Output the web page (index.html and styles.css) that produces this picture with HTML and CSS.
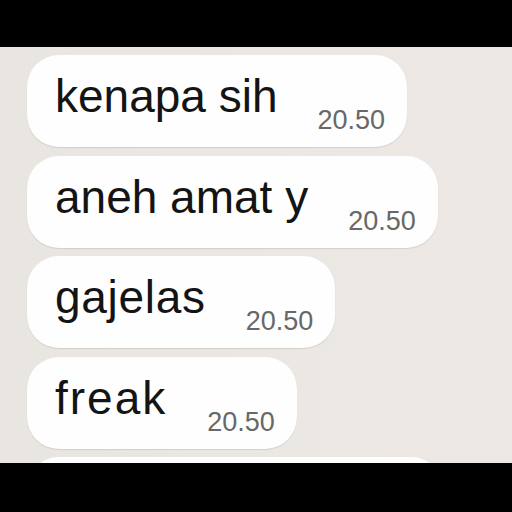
FILE: index.html
```html
<!DOCTYPE html>
<html>
<head>
<meta charset="utf-8">
<link rel="stylesheet" href="styles.css">
</head>
<body>
<div class="bar"></div>
<div class="chat">
  <div class="bubble"><span class="msg">kenapa sih</span><span class="time">20.50</span></div>
  <div class="bubble"><span class="msg">aneh amat y</span><span class="time">20.50</span></div>
  <div class="bubble"><span class="msg msg-mid">gajelas</span><span class="time">20.50</span></div>
  <div class="bubble"><span class="msg msg-loose">freak</span><span class="time">20.50</span></div>
  <div class="bubble bubble-wide"></div>
</div>
<div class="bar bar-bottom"></div>
</body>
</html>
```

FILE: styles.css
```css
html, body {
  margin: 0;
  padding: 0;
  background: #000;
  width: 512px;
  height: 512px;
  overflow: hidden;
  font-family: "Liberation Sans", Arial, sans-serif;
}
.bar {
  height: 47px;
  background: #000;
}
.bar-bottom {
  height: 49px;
}
.chat {
  height: 416px;
  overflow: hidden;
  background: linear-gradient(90deg, #e9e5e0 0%, #ebe7e2 60%, #eee8e5 100%);
  display: flex;
  flex-direction: column;
  align-items: flex-start;
  gap: 8.5px;
  padding: 8px 0 0 27px;
  box-sizing: border-box;
}
.bubble {
  flex: none;
  display: flex;
  align-items: flex-start;
  height: 92px;
  box-sizing: border-box;
  padding: 0 22px 0 28px;
  background: #fefefe;
  border-radius: 32px;
  box-shadow: 0 1px 1px rgba(0, 0, 0, 0.10);
}
.msg {
  font-size: 46px;
  line-height: 46px;
  margin-top: 18px;
  color: #141414;
  white-space: nowrap;
}
.msg-mid {
  letter-spacing: 0.7px;
}
.msg-loose {
  letter-spacing: 2px;
}
.time {
  font-size: 27px;
  line-height: 27px;
  margin-top: 52px;
  margin-left: 40px;
  color: #686868;
  white-space: nowrap;
}
.bubble-wide {
  width: 416px;
}
```
